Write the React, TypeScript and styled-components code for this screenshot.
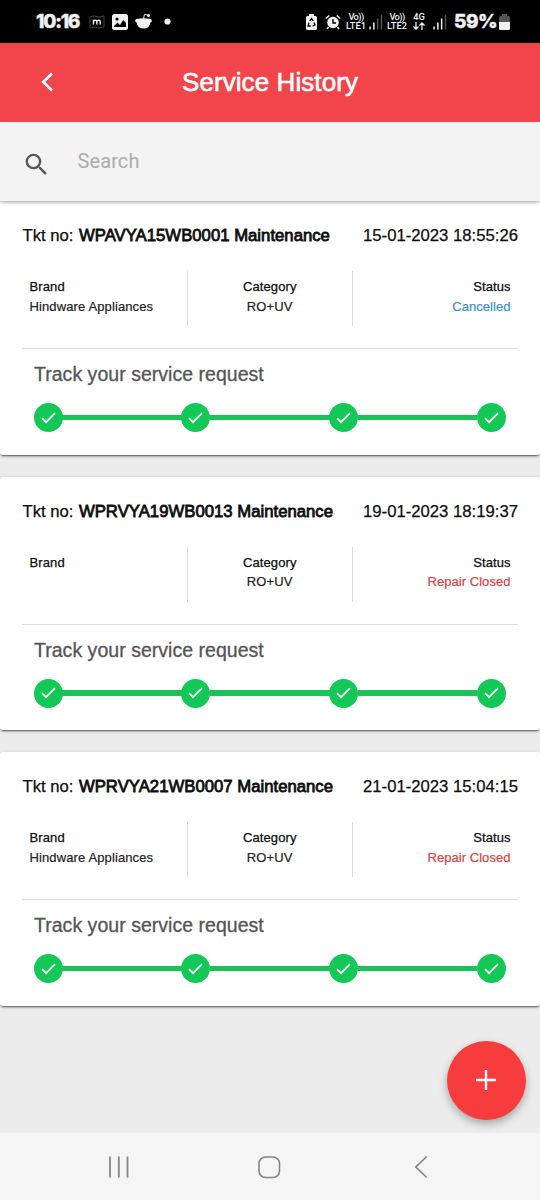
import React from 'react';
import styled, { createGlobalStyle } from 'styled-components';

const Global = createGlobalStyle`
  * { box-sizing: border-box; }
  body { margin: 0; background: #ececec; }
`;

const Screen = styled.div`
  width: 540px;
  height: 1200px;
  display: flex;
  flex-direction: column;
  overflow: hidden;
  background: #ececec;
  color: #0d0d0d;
  font-family: 'Liberation Sans', Arial, sans-serif;
  white-space: nowrap;
`;

const StatusBar = styled.div`
  height: 43px;
  flex: none;
  display: flex;
  justify-content: space-between;
  align-items: center;
  padding: 0 30px 0 36px;
  background: #000;
  color: #f1f1f1;
`;

const StatusGroup = styled.div`
  display: flex;
  align-items: center;
  height: 42px;
`;

const Clock = styled.span<{ $width: number; $gap?: number; $spacing: number }>`
  width: ${p => p.$width}px;
  margin-left: ${p => p.$gap ?? 0}px;
  font: 800 19px/42px Inter, sans-serif;
  letter-spacing: ${p => p.$spacing}px;
  -webkit-text-stroke: 0.4px #f1f1f1;
`;

const Glyph = styled.svg<{ $gap?: number }>`
  display: block;
  flex: none;
  margin-left: ${p => p.$gap ?? 0}px;
`;

const NetLabel = styled.span<{ $gap: number; $width: number }>`
  display: flex;
  flex-direction: column;
  align-items: center;
  gap: 1px;
  width: ${p => p.$width}px;
  margin-left: ${p => p.$gap}px;
  font: 500 9.3px/8px Roboto, sans-serif;
`;

const Narrow = styled.span`
  letter-spacing: -0.6px;
`;

const Header = styled.header`
  height: 79px;
  flex: none;
  display: grid;
  grid-template-columns: 94px 1fr 94px;
  align-items: center;
  background: #f2444b;
  color: #fff;
`;

const Title = styled.h1`
  margin: 0 0 2px;
  text-align: center;
  font-weight: 400;
  font-size: 26px;
  line-height: 30px;
  letter-spacing: 0.08px;
  -webkit-text-stroke: 0.6px #fff;
`;

const SearchBar = styled.div`
  position: relative;
  z-index: 1;
  height: 79px;
  flex: none;
  display: flex;
  align-items: center;
  padding-left: 22px;
  background: #f3f3f3;
  box-shadow: 0 2px 4px -1px rgba(0, 0, 0, 0.4);
`;

const Placeholder = styled.span`
  margin: 0 0 2px 26.5px;
  font: 400 20px/24px Roboto, sans-serif;
  letter-spacing: 0.1px;
  color: #acacac;
`;

const List = styled.main`
  height: 932px;
  flex: none;
  display: flex;
  flex-direction: column;
  gap: 22px;
`;

const Card = styled.article`
  height: 253.5px;
  flex: none;
  padding: 25px 22px 0;
  background: #fff;
  border-radius: 3px;
  box-shadow: 0 2px 2px -1px rgba(0, 0, 0, 0.6), 0 1px 4px rgba(0, 0, 0, 0.16);
`;

const TicketRow = styled.div`
  display: flex;
  justify-content: space-between;
  height: 20px;
  padding-left: 0.5px;
  font-size: 16.7px;
  line-height: 20px;
  -webkit-text-stroke: 0.25px #0d0d0d;
`;

const Ticket = styled.b`
  font-weight: 400;
  letter-spacing: 0.02px;
  margin-left: 0.8px;
  -webkit-text-stroke: 0.8px #0d0d0d;
`;

const Details = styled.div`
  display: grid;
  grid-template-columns: 166px 164.5px 1fr;
  height: 55px;
  margin-top: 25px;
`;

const Cell = styled.div<{ $align: 'left' | 'center' | 'right' }>`
  padding: 6px 7.5px 0;
  text-align: ${p => p.$align};
  font-size: 13px;
  line-height: 19.6px;
  letter-spacing: ${p => (p.$align === 'right' ? 0.05 : 0.12)}px;
  border-right: ${p => (p.$align === 'right' ? 'none' : '1px solid #dcdcdc')};
`;

const Value = styled.div<{ $color?: string }>`
  color: ${p => p.$color ?? '#222'};
  -webkit-text-stroke: 0.2px ${p => p.$color ?? '#222'};
`;

const Label = styled.div`
  -webkit-text-stroke: 0.25px #0d0d0d;
`;

const Track = styled.section`
  margin-top: 22px;
  border-top: 1px solid #dedede;
  padding: 13px 12px 0 11.5px;
`;

const TrackTitle = styled.h2`
  margin: 0 0 0 0.5px;
  font-weight: 400;
  font-size: 19.5px;
  line-height: 24px;
  color: #555;
  letter-spacing: 0.03px;
  -webkit-text-stroke: 0.3px #555;
`;

const Steps = styled.div`
  display: flex;
  align-items: center;
  margin-top: 17px;
`;

const Step = styled.span`
  display: grid;
  place-items: center;
  flex: none;
  width: 29px;
  height: 29px;
  border-radius: 50%;
  background: #14c858;
`;

const Connector = styled.span`
  flex: 1;
  height: 5.5px;
  margin: 0 -0.5px;
  background: #1bc25a;
`;

const AddButton = styled.button`
  position: absolute;
  left: 447px;
  top: 1041px;
  width: 79px;
  height: 79px;
  padding: 0 1px 2px 0;
  display: grid;
  place-items: center;
  border: 0;
  border-radius: 50%;
  background: #f63c3d;
  box-shadow: 0 4px 8px rgba(0, 0, 0, 0.3);
`;

const NavBar = styled.nav`
  height: 67px;
  flex: none;
  display: flex;
  align-items: center;
  padding: 1px 0 0 107px;
  background: #f5f5f5;
`;

const Bars = ({ dim, gap }: { dim: number; gap: number }) => (
  <Glyph $gap={gap} width="14" height="16" viewBox="0 0 14 16">
    {[0, 1, 2, 3].map(i => (
      <rect key={i} x={i * 3.8 + 0.3} y={12 - i * 4 + 0.5} width="1.5" height={i * 4 + 3}
        fill={i >= dim ? '#555' : '#eee'} />
    ))}
  </Glyph>
);

interface Request {
  ticket: string;
  date: string;
  brand: string;
  status: string;
  color: string;
}

const requests: Request[] = [
  { ticket: 'WPAVYA15WB0001', date: '15-01-2023 18:55:26', brand: 'Hindware Appliances', status: 'Cancelled', color: '#3990d0' },
  { ticket: 'WPRVYA19WB0013', date: '19-01-2023 18:19:37', brand: '', status: 'Repair Closed', color: '#d94343' },
  { ticket: 'WPRVYA21WB0007', date: '21-01-2023 15:04:15', brand: 'Hindware Appliances', status: 'Repair Closed', color: '#d94343' },
];

const RequestCard = ({ ticket, date, brand, status, color }: Request) => (
  <Card>
    <TicketRow>
      <span>Tkt no: <Ticket>{ticket} Maintenance</Ticket></span>
      <span>{date}</span>
    </TicketRow>
    <Details>
      <Cell $align="left"><Label>Brand</Label><Value>{brand}</Value></Cell>
      <Cell $align="center"><Label>Category</Label><Value>RO+UV</Value></Cell>
      <Cell $align="right"><Label>Status</Label><Value $color={color}>{status}</Value></Cell>
    </Details>
    <Track>
      <TrackTitle>Track your service request</TrackTitle>
      <Steps>
        {[0, 1, 2, 3].map(i => (
          <React.Fragment key={i}>
            {i > 0 && <Connector />}
            <Step>
              <svg width="15" height="12" viewBox="0 0 15 12" fill="none" stroke="#fff" strokeWidth="1.7">
                <path d="M1 6.2 5 10.2 14 1.2" />
              </svg>
            </Step>
          </React.Fragment>
        ))}
      </Steps>
    </Track>
  </Card>
);

export default function App() {
  return (
    <>
      <Global />
      <Screen>
        <StatusBar>
          <StatusGroup>
            <Clock $width={44} $spacing={-1.2}>10:16</Clock>
            <Glyph $gap={9} width="16" height="14" viewBox="0 0 16 14">
              <path d="M1 2 5 1l5 1 5-1v11l-5 1-5-1-4 1Z" fill="none" stroke="#444" />
              <path d="M4.5 9.5V4.7m0 2c0-2 3.3-2 3.3 0v2.8m0-2.8c0-2 3.4-2 3.4 0v2.8" fill="none" stroke="#f1f1f1" strokeWidth="1.4" />
            </Glyph>
            <Glyph $gap={7} width="16" height="16" viewBox="0 0 16 16">
              <rect width="16" height="16" rx="2.5" fill="#f1f1f1" />
              <circle cx="5" cy="5" r="1.6" fill="#000" />
              <path d="m2 12 3.5-3.5L8 11l3.3-5L14 9v4H2Z" fill="#000" />
            </Glyph>
            <Glyph $gap={7} width="17" height="17" viewBox="0 0 17 17" fill="#f1f1f1">
              <path d="M1.500 6 Q8.500 4.500 15.500 6A1.800 1.800 0 0 1 15.400 9.500Q14.500 15.500 8.500 15.500T1.600 9.500A1.800 1.800 0 0 1 1.500 6Z" />
              <circle cx="13.500" cy="2.400" r="1.500" />
              <path d="m8.500 6 .9-4.500 3.500.5" fill="none" stroke="#f1f1f1" />
            </Glyph>
            <Glyph $gap={12} width="7" height="7" viewBox="0 0 7 7"><circle cx="3.5" cy="3.5" r="3.1" fill="#f1f1f1" /></Glyph>
          </StatusGroup>
          <StatusGroup>
            <Glyph width="11" height="16" viewBox="0 0 11 16">
              <path d="M3 2V0h5v2h1.5Q11 2 11 3.5v11Q11 16 9.5 16h-8Q0 16 0 14.500v-11Q0 2 1.500 2Z" fill="#f1f1f1" />
              <path d="m3.800 7 1.700-2.500L7.200 7M8 8.500l1 2.500-2.500 1M4.800 12H2l1-3.300" fill="none" stroke="#000" strokeWidth="1.300" />
            </Glyph>
            <Glyph $gap={8} width="16" height="16" viewBox="0 0 16 16">
              <circle cx="8" cy="8.500" r="5.800" fill="#f1f1f1" />
              <path d="M.8 4.500 4.300 1.500M15.200 4.500l-3.500-3M3.500 13 2 15M12.500 13l1.500 2" stroke="#f1f1f1" strokeWidth="1.500" />
              <path d="M8 5v4h3" fill="none" stroke="#000" strokeWidth="1.400" />
            </Glyph>
            <NetLabel $gap={5} $width={20}><Narrow>Vo))</Narrow><span>LTE1</span></NetLabel>
            <Bars dim={2} gap={3} />
            <NetLabel $gap={4} $width={20}><Narrow>Vo))</Narrow><span>LTE2</span></NetLabel>
            <NetLabel $gap={5} $width={14}>
              <span>4G</span>
              <svg width="12" height="8" viewBox="0 0 12 8" fill="none" stroke="#f1f1f1" strokeWidth="1.300">
                <path d="M3 0v7M.5 4.500 3 7l2.500-2.500M9 8V1M6.500 3.500 9 1l2.500 2.500" />
              </svg>
            </NetLabel>
            <Bars dim={3} gap={7} />
            <Clock $width={43} $gap={7} $spacing={-0.5}>59%</Clock>
            <Glyph $gap={2} width="11" height="16" viewBox="0 0 11 16">
              <path d="M3 2V0h5v2h1.500Q11 2 11 3.500V8H0V3.500Q0 2 1.500 2Z" fill="#555" />
              <path d="M0 8h11v6.500Q11 16 9.500 16h-8Q0 16 0 14.500Z" fill="#f1f1f1" />
            </Glyph>
          </StatusGroup>
        </StatusBar>
        <Header>
          <Glyph $gap={41} width="13" height="20" viewBox="0 0 13 20" fill="none" stroke="#fff" strokeWidth="2.600" style={{ marginBottom: 2 }}>
            <path d="M11 1.500 2.200 10 11 18.500" />
          </Glyph>
          <Title>Service History</Title>
        </Header>
        <SearchBar>
          <Glyph width="29" height="29" viewBox="0 0 24 24" fill="#585858" style={{ marginTop: 5 }}>
            <path d="M15.500 14h-.79l-.28-.27A6.471 6.471 0 0 0 16 9.500 6.500 6.500 0 1 0 9.500 16c1.610 0 3.090-.59 4.230-1.570l.27.28v.79l5 4.990L20.490 19l-4.990-5zm-6 0C7.010 14 5 11.990 5 9.500S7.010 5 9.500 5 14 7.010 14 9.500 11.990 14 9.500 14z" />
          </Glyph>
          <Placeholder>Search</Placeholder>
        </SearchBar>
        <List>{requests.map(r => <RequestCard key={r.ticket} {...r} />)}</List>
        <NavBar>
          <Glyph width="24" height="24" viewBox="0 0 24 24" stroke="#858585" strokeWidth="1.800">
            <path d="M3 1.500v21M11.800 1.500v21M20.500 1.500v21" />
          </Glyph>
          <Glyph $gap={126} width="24" height="24" viewBox="0 0 24 24">
            <rect x="2" y="2" width="20.500" height="20.500" rx="6.500" fill="none" stroke="#858585" strokeWidth="1.600" />
          </Glyph>
          <Glyph $gap={133} width="14" height="24" viewBox="0 0 14 24" fill="none" stroke="#858585" strokeWidth="1.700">
            <path d="M12.800 1.500 1.800 12l11 10.500" />
          </Glyph>
        </NavBar>
        <AddButton aria-label="Add">
          <svg width="20" height="20" viewBox="0 0 20 20" stroke="#fff" strokeWidth="2.400"><path d="M10 0v20M0 10h20" /></svg>
        </AddButton>
      </Screen>
    </>
  );
}
